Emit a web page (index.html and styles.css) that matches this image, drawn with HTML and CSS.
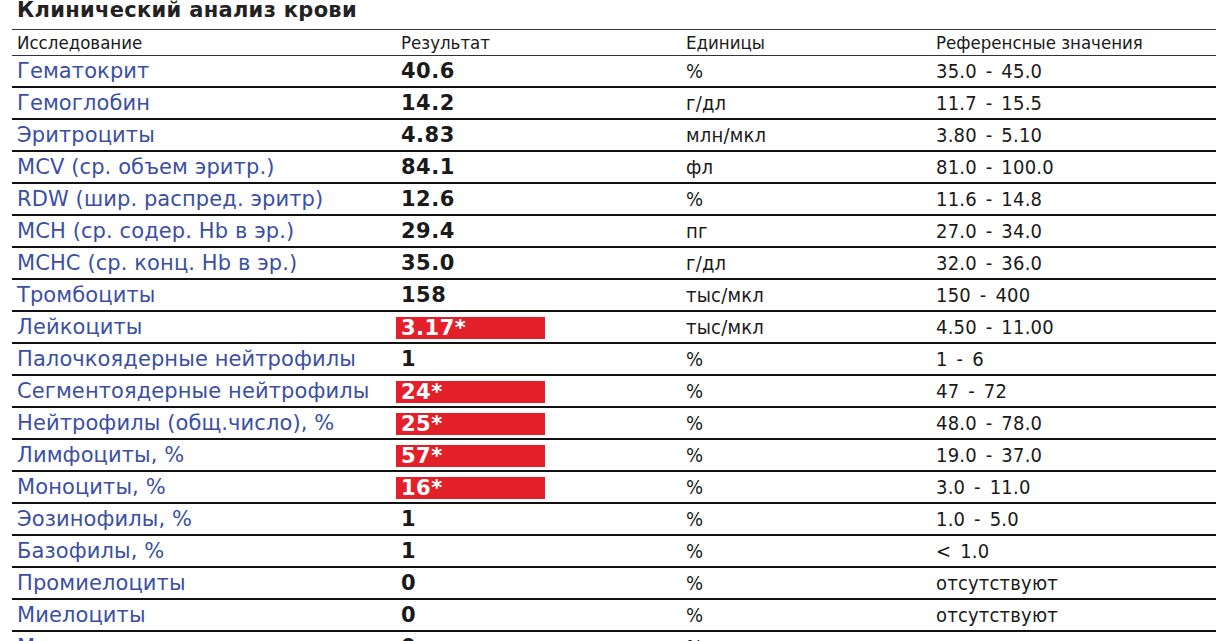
FILE: index.html
```html
<!DOCTYPE html>
<html lang="ru">
<head>
<meta charset="utf-8">
<title>Клинический анализ крови</title>
<link rel="stylesheet" href="styles.css">
</head>
<body>
<h1 class="title">Клинический анализ крови</h1>
<table class="results">
  <colgroup>
    <col class="c-name"><col class="c-res"><col class="c-unit"><col class="c-ref">
  </colgroup>
  <thead>
    <tr><th>Исследование</th><th>Результат</th><th>Единицы</th><th>Референсные значения</th></tr>
  </thead>
  <tbody>
    <tr><td class="name">Гематокрит</td><td class="res">40.6</td><td class="unit">%</td><td class="ref">35.0 - 45.0</td></tr>
    <tr><td class="name">Гемоглобин</td><td class="res">14.2</td><td class="unit">г/дл</td><td class="ref">11.7 - 15.5</td></tr>
    <tr><td class="name">Эритроциты</td><td class="res">4.83</td><td class="unit">млн/мкл</td><td class="ref">3.80 - 5.10</td></tr>
    <tr><td class="name">MCV (ср. объем эритр.)</td><td class="res">84.1</td><td class="unit">фл</td><td class="ref">81.0 - 100.0</td></tr>
    <tr><td class="name">RDW (шир. распред. эритр)</td><td class="res">12.6</td><td class="unit">%</td><td class="ref">11.6 - 14.8</td></tr>
    <tr><td class="name">MCH (ср. содер. Hb в эр.)</td><td class="res">29.4</td><td class="unit">пг</td><td class="ref">27.0 - 34.0</td></tr>
    <tr><td class="name">MCHC (ср. конц. Hb в эр.)</td><td class="res">35.0</td><td class="unit">г/дл</td><td class="ref">32.0 - 36.0</td></tr>
    <tr><td class="name">Тромбоциты</td><td class="res">158</td><td class="unit">тыс/мкл</td><td class="ref">150 - 400</td></tr>
    <tr><td class="name">Лейкоциты</td><td class="res flagged"><span class="flag">3.17*</span></td><td class="unit">тыс/мкл</td><td class="ref">4.50 - 11.00</td></tr>
    <tr><td class="name">Палочкоядерные нейтрофилы</td><td class="res">1</td><td class="unit">%</td><td class="ref">1 - 6</td></tr>
    <tr><td class="name">Сегментоядерные нейтрофилы</td><td class="res flagged"><span class="flag">24*</span></td><td class="unit">%</td><td class="ref">47 - 72</td></tr>
    <tr><td class="name">Нейтрофилы (общ.число), %</td><td class="res flagged"><span class="flag">25*</span></td><td class="unit">%</td><td class="ref">48.0 - 78.0</td></tr>
    <tr><td class="name">Лимфоциты, %</td><td class="res flagged"><span class="flag">57*</span></td><td class="unit">%</td><td class="ref">19.0 - 37.0</td></tr>
    <tr><td class="name">Моноциты, %</td><td class="res flagged"><span class="flag">16*</span></td><td class="unit">%</td><td class="ref">3.0 - 11.0</td></tr>
    <tr><td class="name">Эозинофилы, %</td><td class="res">1</td><td class="unit">%</td><td class="ref">1.0 - 5.0</td></tr>
    <tr><td class="name">Базофилы, %</td><td class="res">1</td><td class="unit">%</td><td class="ref">&lt; 1.0</td></tr>
    <tr><td class="name">Промиелоциты</td><td class="res">0</td><td class="unit">%</td><td class="ref">отсутствуют</td></tr>
    <tr><td class="name">Миелоциты</td><td class="res">0</td><td class="unit">%</td><td class="ref">отсутствуют</td></tr>
    <tr><td class="name">Метамиелоциты</td><td class="res">0</td><td class="unit">%</td><td class="ref">отсутствуют</td></tr>
  </tbody>
</table>
</body>
</html>
```

FILE: styles.css
```css
html, body {
  margin: 0;
  padding: 0;
  background: #ffffff;
}
body {
  font-family: "DejaVu Sans", Verdana, sans-serif;
  color: #1a1a1a;
  overflow: hidden;
}
.title {
  margin: 0 0 0 17px;
  font-size: 21px;
  line-height: 20px;
  letter-spacing: 0.3px;
  height: 29px;
  font-weight: bold;
  color: #222;
}
.results {
  margin-left: 12px;
  width: 1204px;
  border-collapse: collapse;
  table-layout: fixed;
}
.c-name { width: 384px; }
.c-res { width: 285px; }
.c-unit { width: 250px; }
.c-ref { width: 285px; }
.results th {
  font-family: "DejaVu Sans Condensed", "DejaVu Sans", sans-serif;
  font-weight: normal;
  font-size: 18.5px;
  text-align: left;
  padding: 0 0 0 5px;
  height: 25px;
  line-height: 25px;
  border-top: 1px solid #333;
  border-bottom: 1px solid #333;
  color: #1a1a1a;
}
.results td {
  padding: 0 0 0 5px;
  height: 30px;
  line-height: 29px;
  border-bottom: 2px solid #111;
  white-space: nowrap;
  overflow: hidden;
}
.name {
  font-size: 21px;
  letter-spacing: 0.1px;
  color: #3a4fa3;
}
.res {
  font-size: 21px;
  letter-spacing: 0.5px;
  font-weight: bold;
}
.unit, .ref {
  font-family: "DejaVu Sans Condensed", "DejaVu Sans", sans-serif;
  font-size: 20px;
  letter-spacing: 0.2px;
}
.ref {
  word-spacing: 3px;
}
.results td.flagged {
  padding-left: 0;
}
.flag {
  display: inline-block;
  width: 144px;
  height: 22px;
  line-height: 22px;
  padding-left: 5px;
  background: #e3202a;
  color: #fff;
  vertical-align: middle;
}
```
